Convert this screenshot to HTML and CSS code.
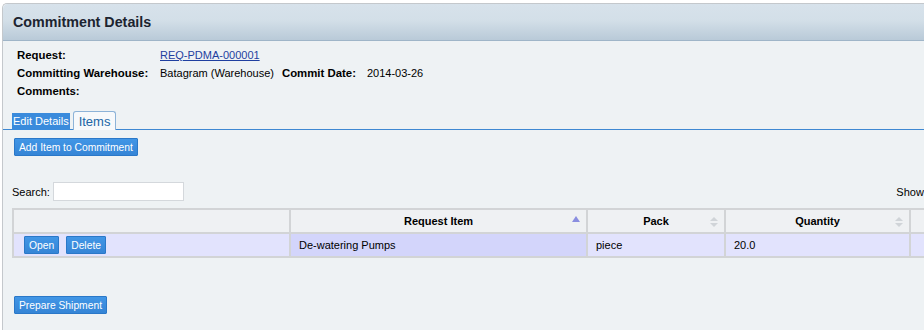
FILE: index.html
```html
<!DOCTYPE html>
<html lang="en">
<head>
  <meta charset="UTF-8" />
  <title>Commitment Details</title>
  <link rel="stylesheet" href="styles.css">
</head>
<body>
  <div class="panel">
    <div class="panel-head">Commitment Details</div>

    <table class="details">
      <tr>
        <th>Request:</th>
        <td colspan="3"><a href="#">REQ-PDMA-000001</a></td>
      </tr>
      <tr>
        <th>Committing Warehouse:</th>
        <td>Batagram (Warehouse)</td>
        <th class="second">Commit Date:</th>
        <td>2014-03-26</td>
      </tr>
      <tr>
        <th>Comments:</th>
        <td colspan="3"></td>
      </tr>
    </table>

    <ul class="tabs">
      <li class="tab">Edit Details</li>
      <li class="tab active">Items</li>
    </ul>

    <div class="tab-body">
      <button class="btn add-btn">Add Item to Commitment</button>

      <div class="list-tools">
        <label class="search">Search: <input type="text"></label>
        <div class="length">Show <select><option>10</option></select> entries</div>
      </div>

      <table class="items">
        <thead>
          <tr>
            <th class="c-actions"></th>
            <th class="c-item">Request Item<span class="sort asc"></span></th>
            <th class="c-pack">Pack<span class="sort both"></span></th>
            <th class="c-qty">Quantity<span class="sort both"></span></th>
            <th class="c-more">Status</th>
          </tr>
        </thead>
        <tbody>
          <tr>
            <td class="c-actions"><button class="btn">Open</button><button class="btn">Delete</button></td>
            <td class="sorted">De-watering Pumps</td>
            <td>piece</td>
            <td>20.0</td>
            <td></td>
          </tr>
        </tbody>
      </table>

      <button class="btn ship-btn">Prepare Shipment</button>
    </div>
  </div>
</body>
</html>
```

FILE: styles.css
```css
:root {
  --panel-bg: #eef2f4;
  --line: #d2d4d6;
  --blue: #3a8bdc;
  --blue-dark: #2a78c8;
  --row: #e2e3fd;
  --row-sorted: #d3d5fb;
}

* {
  box-sizing: border-box;
}

html {
  overflow: hidden;
}

body {
  margin: 0;
  background: #fff;
  font-family: "Liberation Sans", Arial, sans-serif;
  font-size: 11px;
  color: #000;
}

.panel {
  margin: 3px 0 0 2px;
  width: 1030px;
  min-height: 340px;
  background: var(--panel-bg);
  border: 1px solid #c4c8cc;
  border-right: none;
  border-top-left-radius: 5px;
}

.panel-head {
  height: 37px;
  padding: 0 0 0 10px;
  line-height: 36px;
  font-size: 14.3px;
  font-weight: bold;
  color: #1c2430;
  background: linear-gradient(#d7e2eb 0%, #d3dfe8 45%, #b9cad8 100%);
  border-bottom: 1px solid #9fb5c8;
  border-top-left-radius: 5px;
}

.details {
  margin: 5px 0 0 12px;
  border-collapse: collapse;
}

.details th,
.details td {
  height: 18px;
  padding: 0 2px;
  text-align: left;
  white-space: nowrap;
}

.details th {
  width: 143px;
  font-size: 11.4px;
  font-weight: bold;
}

.details th.second {
  width: auto;
  padding-left: 6px;
  padding-right: 9px;
}

.details a {
  color: #1f3fa0;
}

.tabs {
  list-style: none;
  margin: 11px 0 0;
  padding: 0 0 0 9px;
  display: flex;
  align-items: flex-end;
  gap: 3px;
  border-bottom: 1px solid #3e88d2;
}

.tab {
  height: 17px;
  margin-bottom: -1px;
  padding: 0 1px;
  line-height: 16px;
  font-size: 11px;
  color: #fff;
  background: var(--blue);
}

.tab.active {
  height: 19px;
  padding: 0 5px;
  line-height: 19px;
  font-size: 13px;
  color: #2266a6;
  background: #f7f9fb;
  border: 1px solid #8db3d8;
  border-bottom: none;
  border-radius: 3px 3px 0 0;
}

.tab-body {
  padding: 8px 34px 0 9px;
}

.btn {
  height: 18px;
  padding: 0 4px;
  font-family: inherit;
  font-size: 10.3px;
  color: #fff;
  background: linear-gradient(#4196e6, #3585d6);
  border: 1px solid var(--blue-dark);
  border-radius: 1px;
}

.add-btn {
  margin-left: 2px;
}

.list-tools {
  margin-top: 26px;
  display: flex;
  justify-content: space-between;
  align-items: center;
}

.search input {
  width: 131px;
  height: 19px;
  margin-left: 0;
  border: 1px solid #d4d8dc;
  background: #fff;
}

.length select {
  height: 19px;
  font-size: 11px;
}

.items {
  width: calc(100% + 34px);
  margin-top: 7px;
  border-collapse: collapse;
}

.items th,
.items td {
  height: 24px;
  padding: 0 8px;
  border: 2px solid var(--line);
  text-align: left;
  white-space: nowrap;
}

.items th {
  position: relative;
  text-align: center;
  font-weight: bold;
  background: #eff1f3;
}

.items td {
  background: var(--row);
}

.items td.sorted {
  background: var(--row-sorted);
}

.c-actions { width: 277px; }
.c-item { width: 297px; }
.c-pack { width: 138px; }
.c-qty { width: 185px; }

.items td.c-actions {
  padding-left: 10px;
}

.items td .btn {
  margin-right: 7px;
}

.sort {
  position: absolute;
  right: 6px;
  top: 6px;
  width: 8px;
  height: 12px;
}

.sort.asc::before {
  content: "";
  position: absolute;
  top: 0;
  left: 0;
  border-left: 4px solid transparent;
  border-right: 4px solid transparent;
  border-bottom: 6px solid #8a8ee0;
}

.sort.both::before,
.sort.both::after {
  content: "";
  position: absolute;
  left: 0;
  border-left: 4px solid transparent;
  border-right: 4px solid transparent;
}

.sort.both::before {
  top: 1px;
  border-bottom: 4px solid #d0d4d8;
}

.sort.both::after {
  top: 7px;
  border-top: 4px solid #d0d4d8;
}

.ship-btn {
  margin: 38px 0 0 2px;
}
```
